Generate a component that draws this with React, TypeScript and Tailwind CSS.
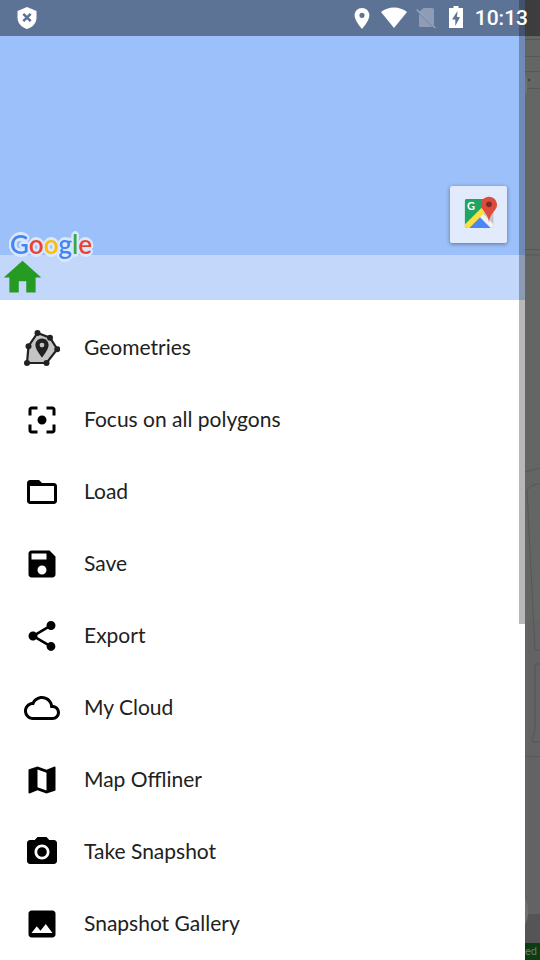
import type { ReactNode } from 'react';

const menuItems: { label: string; icon: ReactNode }[] = [
  { label: 'Geometries', icon: <GeometriesIcon /> },
  {
    label: 'Focus on all polygons',
    icon: (
      <MaterialIcon d="M5 15H3v4c0 1.100.9 2 2 2h4v-2H5v-4zM5 5h4V3H5c-1.100 0-2 .9-2 2v4h2V5zm14-2h-4v2h4v4h2V5c0-1.100-.9-2-2-2zm0 16h-4v2h4c1.100 0 2-.9 2-2v-4h-2v4zM12 9c-1.660 0-3 1.340-3 3s1.340 3 3 3 3-1.340 3-3-1.340-3-3-3z" />
    ),
  },
  {
    label: 'Load',
    icon: (
      <MaterialIcon d="M20 6h-8l-2-2H4c-1.100 0-1.990.9-1.990 2L2 18c0 1.100.9 2 2 2h16c1.100 0 2-.9 2-2V8c0-1.100-.9-2-2-2zm0 12H4V8h16v10z" />
    ),
  },
  {
    label: 'Save',
    icon: (
      <MaterialIcon d="M17 3H5c-1.110 0-2 .9-2 2v14c0 1.100.89 2 2 2h14c1.100 0 2-.9 2-2V7l-4-4zm-5 16c-1.660 0-3-1.340-3-3s1.340-3 3-3 3 1.340 3 3-1.340 3-3 3zm3-10H5V5h10v4z" />
    ),
  },
  {
    label: 'Export',
    icon: (
      <MaterialIcon d="M18 16.080c-.76 0-1.440.3-1.960.77L8.910 12.700c.05-.23.09-.46.09-.7s-.04-.47-.09-.7l7.050-4.110c.54.5 1.250.81 2.040.81 1.660 0 3-1.340 3-3s-1.340-3-3-3-3 1.340-3 3c0 .24.04.47.09.7L8.040 9.810C7.500 9.310 6.790 9 6 9c-1.660 0-3 1.340-3 3s1.340 3 3 3c.79 0 1.500-.31 2.040-.81l7.120 4.160c-.05.21-.08.43-.08.65 0 1.610 1.310 2.920 2.920 2.920s2.920-1.310 2.920-2.920-1.310-2.920-2.920-2.920z" />
    ),
  },
  {
    label: 'My Cloud',
    icon: (
      <MaterialIcon d="M19.350 10.040C18.670 6.590 15.640 4 12 4 9.110 4 6.600 5.640 5.350 8.040 2.340 8.360 0 10.910 0 14c0 3.310 2.690 6 6 6h13c2.760 0 5-2.240 5-5 0-2.640-2.050-4.780-4.650-4.960zM19 18H6c-2.210 0-4-1.790-4-4s1.790-4 4-4h.71C7.370 7.690 9.480 6 12 6c3.040 0 5.500 2.460 5.500 5.500v.5H19c1.660 0 3 1.340 3 3s-1.340 3-3 3z" />
    ),
  },
  {
    label: 'Map Offliner',
    icon: (
      <MaterialIcon d="M20.500 3l-.16.03L15 5.100 9 3 3.360 4.900c-.21.07-.36.25-.36.48V20.500c0 .28.22.5.5.5l.16-.03L9 18.900l6 2.100 5.640-1.900c.21-.07.36-.25.36-.48V3.500c0-.28-.22-.5-.5-.5zM15 19l-6-2.110V5l6 2.110V19z" />
    ),
  },
  {
    label: 'Take Snapshot',
    icon: (
      <MaterialIcon d="M12 8.800a3.200 3.200 0 1 0 0 6.400a3.200 3.200 0 1 0 0-6.400zM9 2L7.170 4H4c-1.100 0-2 .9-2 2v12c0 1.100.9 2 2 2h16c1.100 0 2-.9 2-2V6c0-1.100-.9-2-2-2h-3.170L15 2H9zm3 15c-2.760 0-5-2.240-5-5s2.240-5 5-5 5 2.240 5 5-2.240 5-5 5z" />
    ),
  },
  {
    label: 'Snapshot Gallery',
    icon: (
      <MaterialIcon d="M21 19V5c0-1.100-.9-2-2-2H5c-1.100 0-2 .9-2 2v14c0 1.100.9 2 2 2h14c1.100 0 2-.9 2-2zM8.500 13.500l2.500 3.010L14.500 12l4.500 6H5l3.500-4.500z" />
    ),
  },
];

function MaterialIcon({ d }: { d: string }) {
  return (
    <svg viewBox="0 0 24 24" className="size-9 shrink-0 fill-black" aria-hidden="true">
      <path d={d} />
    </svg>
  );
}

function GeometriesIcon() {
  const points = [
    [13.5, 3],
    [26, 7.7],
    [33.3, 19.2],
    [22.5, 33],
    [3, 33],
    [4.5, 16.2],
  ];

  return (
    <svg viewBox="0 0 36 36" className="size-9 shrink-0" aria-hidden="true">
      <polygon
        points={points.map((p) => p.join(',')).join(' ')}
        fill="#c4c4c4"
        stroke="#212121"
        strokeWidth="2.200"
      />
      {points.map(([x, y]) => (
        <circle key={`${x}-${y}`} cx={x} cy={y} r="3" fill="#212121" />
      ))}
      <path
        fillRule="evenodd"
        fill="#212121"
        d="M18 8.500c-3.700 0-6.600 2.900-6.600 6.500 0 4.800 6.600 12.500 6.600 12.500s6.600-7.700 6.600-12.500c0-3.600-2.900-6.500-6.600-6.500zm0 4.200a2.400 2.400 0 1 1 0 4.800a2.400 2.400 0 1 1 0-4.800z"
      />
    </svg>
  );
}

function GoogleMapsIcon() {
  return (
    <svg viewBox="2 2 144 144" className="size-12" aria-hidden="true">
      <defs>
        <clipPath id="tile">
          <rect x="31" y="26" width="86" height="87" rx="6" />
        </clipPath>
      </defs>
      <g clipPath="url(#tile)">
        <rect x="31" y="26" width="86" height="87" fill="#1fa463" />
        <path d="M117 26v87L74 72z" fill="#c4c4c4" />
        <path d="M74 76L34 116h80z" fill="#4a87f4" />
        <path d="M82 66l42 42v12h-8L74 78z" fill="#f1f1f1" />
        <path d="M26 108L94 40l10 14L40 118z" fill="#ffdf3d" />
      </g>
      <text
        x="38"
        y="59"
        fill="#fff"
        fontSize="33"
        fontWeight="700"
        fontFamily="Lato, sans-serif"
      >
        G
      </text>
      <path
        d="M104 19c-13.300 0-24 10.700-24 24 0 6 2 11 6 16 10 13 16 20 18 37 2-17 8-24 18-37 4-5 6-10 6-16 0-13.300-10.700-24-24-24z"
        fill="#dd4b3e"
      />
      <circle cx="104" cy="42" r="8.500" fill="#7c2a23" />
    </svg>
  );
}

function StatusBar() {
  return (
    <div className="absolute inset-x-0 top-0 z-20 flex h-9 items-center justify-between bg-black/40 px-3 text-white">
      <svg viewBox="0 0 32 32" className="size-8" aria-label="Shield">
        <path
          d="M15 5l9.500 4v6.500c0 5.500-4 10-9.500 11.500-5.500-1.500-9.500-6-9.500-11.500V9z"
          fill="#fff"
        />
        <path d="M11.300 11.800l7.400 7.400M18.700 11.800l-7.400 7.400" stroke="#5d7396" strokeWidth="2.600" />
      </svg>
      <div className="flex items-center">
        <svg viewBox="1 0 32 32" className="size-8" fill="#fff" aria-label="Location">
          <path
            fillRule="evenodd"
            d="M16 6c-4.100 0-7.400 3.200-7.400 7.300C8.600 18.700 16 27 16 27s7.400-8.300 7.400-13.700C23.400 9.200 20.100 6 16 6zm0 4.700a2.600 2.600 0 1 1 0 5.200a2.600 2.600 0 1 1 0-5.200z"
          />
        </svg>
        <svg viewBox="1 0 32 32" className="size-8" fill="#fff" aria-label="Wi-Fi">
          <path d="M16 26L3 10c3.700-2.900 8.200-4.500 13-4.500s9.300 1.600 13 4.500z" />
        </svg>
        <svg viewBox="1 0 32 32" className="size-8" aria-label="No SIM">
          <path d="M13.500 6H22a2 2 0 0 1 2 2v15.500L9.500 9.500zM9 11.500L22.500 25H10.500A1.500 1.500 0 0 1 9 23.500z" fill="#fff" opacity=".3" />
          <path d="M6.700 7.500l18.500 18.500" stroke="#fff" strokeWidth="1.500" opacity=".35" />
        </svg>
        <svg viewBox="1 0 32 32" className="size-8" fill="#fff" aria-label="Charging">
          <path
            fillRule="evenodd"
            d="M11.500 4h5v2H21v20H7V6h4.500zM15.500 9L10 17.500h3.300V24L18 15h-3z"
          />
        </svg>
        <time className="font-[Roboto,sans-serif] text-[21px] leading-6 font-medium">10:13</time>
      </div>
    </div>
  );
}

function GoogleLogo() {
  return (
    <div
      className="absolute bottom-10 left-2.5 font-[Lato,sans-serif] text-[26px] leading-8 font-semibold [filter:drop-shadow(1px_1px_0_#dbe7fb)_drop-shadow(-1px_-1px_0_#dbe7fb)_drop-shadow(1px_-1px_0_#dbe7fb)_drop-shadow(-1px_1px_0_#dbe7fb)_drop-shadow(0_1px_0_#dbe7fb)_drop-shadow(0_-1px_0_#dbe7fb)]"
    >
      <span className="text-[#4285f4]">G</span>
      <span className="text-[#ea4335]">o</span>
      <span className="text-[#fbbc05]">o</span>
      <span className="text-[#4285f4]">g</span>
      <span className="text-[#34a853]">l</span>
      <span className="text-[#ea4335]">e</span>
    </div>
  );
}

// Sliver of the map that stays visible beside the open drawer
function DimmedMap() {
  return (
    <div className="relative flex w-[15px] shrink-0 flex-col overflow-hidden bg-[#646664]">
      <svg
        viewBox="0 0 15 960"
        preserveAspectRatio="xMinYMin slice"
        className="absolute inset-0 size-full"
        fill="none"
        stroke="#565756"
        aria-hidden="true"
      >
        <rect y="620" width="15" height="340" fill="#636363" stroke="none" />
        <rect y="914" width="15" height="30" fill="#555" stroke="none" />
        <path d="M0 39.500h15M0 56.500h15M0 71.500h15M0 88.500h15M0 249.500h15M0 255h15" />
        <path d="M0 472l15-4M15 483l-9 3-4 4 8 160h5M15 664h-5v65l-3 13h8M0 756.500h15" />
        <path d="M0 74a30 30 0 0 1 0 23zM0 898a30 30 0 0 1 0 27z" fill="#707070" stroke="none" />
        <circle cx="4" cy="80" r="1.300" fill="#444" stroke="none" />
      </svg>
      <div className="relative mt-auto bg-[#0b3c12] font-[Roboto,sans-serif] text-[11px] leading-[17px] text-[#6d796e]">
        ed
      </div>
    </div>
  );
}

export default function App() {
  return (
    <div className="relative flex min-h-screen overflow-hidden bg-white">
      <StatusBar />

      <aside className="relative min-w-0 flex-1">
        <header className="relative bg-[#9cc0fa]">
          <div className="flex justify-end pt-[186px] pr-[18px] pb-3">
            <button
              type="button"
              aria-label="Open in Google Maps"
              className="flex size-[57px] items-center justify-center rounded-xs bg-[#e1ebfb] shadow-[0_1px_4px_rgba(0,0,0,0.4)]"
            >
              <GoogleMapsIcon />
            </button>
          </div>
          <div className="bg-[#c2d7fa]">
            <button type="button" aria-label="Home" className="block">
              <svg viewBox="0 0 24 24" className="size-[45px] fill-[#259b24]" aria-hidden="true">
                <path d="M10 20v-6h4v6h5v-8h3L12 3 2 12h3v8z" />
              </svg>
            </button>
          </div>
          <GoogleLogo />
        </header>

        <nav className="pt-3">
          <ul>
            {menuItems.map((item) => (
              <li key={item.label}>
                <button
                  type="button"
                  className="flex h-[72px] w-full items-center gap-6 px-6 text-left font-[Lato,sans-serif] text-[21px] leading-7 text-[#212121]"
                >
                  {item.icon}
                  <span className="pb-0.5">{item.label}</span>
                </button>
              </li>
            ))}
          </ul>
        </nav>

        {/* Scrollbar thumb */}
        <div className="absolute top-0 right-0 h-[65%] w-1.5 bg-black/28" />
      </aside>

      <DimmedMap />
    </div>
  );
}
